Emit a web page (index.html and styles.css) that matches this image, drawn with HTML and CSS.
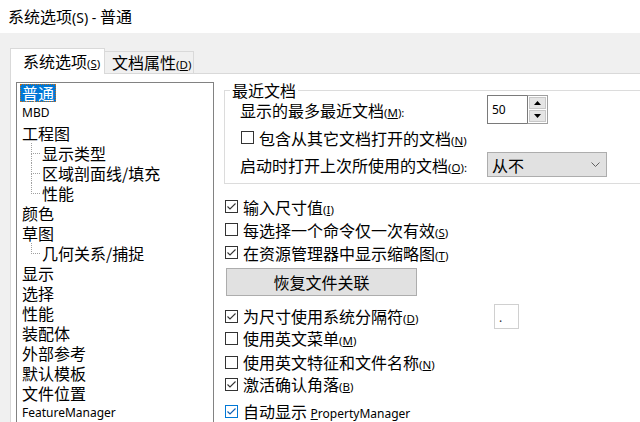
FILE: index.html
```html
<!DOCTYPE html>
<html lang="zh-CN">
<head>
<meta charset="utf-8">
<title>系统选项(S) - 普通</title>
<link rel="stylesheet" href="styles.css">
</head>
<body>
<div class="title">系统选项<span class="tl">(S) - </span>普通</div>
<div class="dialog">
  <div class="tabs">
    <div class="tab active">系统选项<span class="k">(<u>S</u>)</span></div>
    <div class="tab">文档属性<span class="k">(<u>D</u>)</span></div>
  </div>
  <div class="panel">
    <ul class="tree">
      <li><span class="item sel">普通</span></li>
      <li><span class="item lat">MBD</span></li>
      <li><span class="item">工程图</span></li>
      <li class="child"><span class="item">显示类型</span></li>
      <li class="child"><span class="item">区域剖面线/填充</span></li>
      <li class="child last"><span class="item">性能</span></li>
      <li><span class="item">颜色</span></li>
      <li><span class="item">草图</span></li>
      <li class="child last"><span class="item">几何关系/捕捉</span></li>
      <li><span class="item">显示</span></li>
      <li><span class="item">选择</span></li>
      <li><span class="item">性能</span></li>
      <li><span class="item">装配体</span></li>
      <li><span class="item">外部参考</span></li>
      <li><span class="item">默认模板</span></li>
      <li><span class="item">文件位置</span></li>
      <li><span class="item lat">FeatureManager</span></li>
    </ul>
    <div class="main">
      <fieldset class="group">
        <legend>最近文档</legend>
        <div class="grow r1">
          <span class="glabel">显示的最多最近文档<span class="k">(<u>M</u>):</span></span>
          <div class="spin">
            <div class="spin-field lat">50</div>
            <div class="spin-btns">
              <div class="sbtn"><svg width="7" height="4" viewBox="0 0 7 4"><path d="M0 4 L3.5 0 L7 4 Z" fill="#000"/></svg></div>
              <div class="sbtn"><svg width="7" height="4" viewBox="0 0 7 4"><path d="M0 0 L3.5 4 L7 0 Z" fill="#000"/></svg></div>
            </div>
          </div>
        </div>
        <div class="grow r2">
          <span class="cb in"></span>
          <span class="txt">包含从其它文档打开的文档<span class="k">(<u>N</u>)</span></span>
        </div>
        <div class="grow r3">
          <span class="glabel">启动时打开上次所使用的文档<span class="k">(<u>O</u>):</span></span>
          <div class="combo">
            <span>从不</span>
            <svg width="9" height="5" viewBox="0 0 9 5"><polyline points="0.5,0.5 4.5,4.5 8.5,0.5" fill="none" stroke="#606060" stroke-width="1"/></svg>
          </div>
        </div>
      </fieldset>

      <div class="row t23 first">
        <span class="cb"><svg width="11" height="11" viewBox="0 0 11 11"><path d="M1.5 5.5 L4 8 L9.5 2.5" fill="none" stroke="#333" stroke-width="1.1"/></svg></span>
        <span class="txt">输入尺寸值<span class="k">(<u>I</u>)</span></span>
      </div>
      <div class="row t23">
        <span class="cb"></span>
        <span class="txt">每选择一个命令仅一次有效<span class="k">(<u>S</u>)</span></span>
      </div>
      <div class="row t23">
        <span class="cb"><svg width="11" height="11" viewBox="0 0 11 11"><path d="M1.5 5.5 L4 8 L9.5 2.5" fill="none" stroke="#333" stroke-width="1.1"/></svg></span>
        <span class="txt">在资源管理器中显示缩略图<span class="k">(<u>T</u>)</span></span>
      </div>
      <button class="btn">恢复文件关联</button>
      <div class="row r4">
        <span class="cb"><svg width="11" height="11" viewBox="0 0 11 11"><path d="M1.5 5.5 L4 8 L9.5 2.5" fill="none" stroke="#333" stroke-width="1.1"/></svg></span>
        <span class="txt wide">为尺寸使用系统分隔符<span class="k">(<u>D</u>)</span></span>
        <span class="sep lat">.</span>
      </div>
      <div class="row">
        <span class="cb"></span>
        <span class="txt">使用英文菜单<span class="k">(<u>M</u>)</span></span>
      </div>
      <div class="row r6">
        <span class="cb"></span>
        <span class="txt">使用英文特征和文件名称<span class="k">(<u>N</u>)</span></span>
      </div>
      <div class="row">
        <span class="cb"><svg width="11" height="11" viewBox="0 0 11 11"><path d="M1.5 5.5 L4 8 L9.5 2.5" fill="none" stroke="#333" stroke-width="1.1"/></svg></span>
        <span class="txt">激活确认角落<span class="k">(<u>B</u>)</span></span>
      </div>
      <div class="row r8">
        <span class="cb focus"><svg width="11" height="11" viewBox="0 0 11 11"><path d="M1.5 5.5 L4 8 L9.5 2.5" fill="none" stroke="#1560b0" stroke-width="1.2"/></svg></span>
        <span class="txt">自动显示 <span class="lat"><u>P</u>ropertyManager</span></span>
      </div>
    </div>
  </div>
</div>
</body>
</html>
```
FILE: styles.css
```css
* { box-sizing: border-box; }

html, body {
  margin: 0;
  padding: 0;
}

body {
  width: 640px;
  height: 422px;
  overflow: hidden;
  background: #f0f0f0;
  font-family: "Noto Sans CJK SC", sans-serif;
  font-size: 16px;
  color: #000;
}

.lat {
  font-family: "Noto Sans", "Noto Sans CJK SC", sans-serif;
  font-size: 12px;
}

.k {
  font-family: "Noto Sans", sans-serif;
  font-size: 11.5px;
}

.k u { text-decoration-thickness: 1px; text-underline-offset: 1px; }

.title {
  height: 33px;
  background: #fff;
  padding-left: 8px;
  line-height: 32px;
}

.title .tl {
  font-family: "Noto Sans", sans-serif;
  font-size: 14px;
}

.tabs {
  height: 40px;
  display: flex;
  align-items: flex-end;
  padding-left: 10px;
}

.tab {
  border: 1px solid #d9d9d9;
  border-bottom: none;
  white-space: nowrap;
}

.tab.active {
  width: 95px;
  height: 26px;
  margin-bottom: -1px;
  background: #fff;
  padding-left: 12px;
  line-height: 24px;
  position: relative;
  z-index: 1;
}

.tab:not(.active) {
  width: 89px;
  height: 22px;
  border-left: none;
  background: #f0f0f0;
  padding-left: 7px;
  line-height: 20px;
}

.panel {
  margin-left: 10px;
  height: 349px;
  background: #fff;
  border-top: 1px solid #d9d9d9;
  border-left: 1px solid #d9d9d9;
  display: flex;
  align-items: flex-start;
}

/* tree */
.tree {
  list-style: none;
  margin: 8px 0 0 5px;
  padding: 0;
  width: 198px;
  height: 360px;
  flex: none;
  border: 1px solid #828282;
  border-bottom: none;
}

.tree li {
  height: 20px;
  line-height: 20px;
  white-space: nowrap;
  position: relative;
}

.item {
  display: inline-block;
  margin-left: 3px;
  padding: 0 2px;
  height: 18px;
  line-height: 18px;
  margin-top: 1px;
  vertical-align: top;
}

.item.sel {
  background: #0078d7;
  color: #fff;
  outline: 1px dotted #c07020;
  outline-offset: -1px;
}

.tree li.child .item { margin-left: 23px; }

.tree li.child::before {
  content: "";
  position: absolute;
  left: 14px;
  top: 0;
  width: 8px;
  height: 10px;
  border-left: 1px dotted #a0a0a0;
  border-bottom: 1px dotted #a0a0a0;
}

.tree li.child:not(.last)::after {
  content: "";
  position: absolute;
  left: 14px;
  top: 10px;
  bottom: 0;
  border-left: 1px dotted #a0a0a0;
}

/* right side */
.main {
  margin-left: 10px;
  width: 440px;
  flex: none;
  display: flex;
  flex-direction: column;
  align-items: flex-start;
}

.group {
  margin: 10px 0 0 0;
  width: 440px;
  min-width: 0;
  border: 1px solid #dcdcdc;
  padding: 0 0 5px 15px;
}

.group legend {
  margin-left: -10px;
  padding: 0 2px;
  line-height: 12px;
}

.grow {
  display: flex;
  align-items: center;
  white-space: nowrap;
}

.grow.r1 { height: 29px; margin-top: -1px; }
.grow.r2 { height: 27px; padding-left: 1px; }
.grow.r3 { height: 27px; }

.glabel {
  width: 247px;
  flex: none;
}

.spin {
  display: flex;
  height: 29px;
}

.spin-field {
  width: 40px;
  border: 1px solid #7a7a7a;
  border-right: none;
  padding-left: 4px;
  display: flex;
  align-items: center;
}

.spin-btns {
  width: 21px;
  display: flex;
  flex-direction: column;
  border: 1px solid #a0a0a0;
  border-left-color: #7a7a7a;
  padding: 1px;
  gap: 1px;
  background: #fff;
}

.sbtn {
  flex: 1;
  background: #e5e5e5;
  border: 1px solid #c8c8c8;
  display: flex;
  align-items: center;
  justify-content: center;
}

.combo {
  width: 120px;
  height: 25px;
  background: #e1e1e1;
  border: 1px solid #adadad;
  display: flex;
  align-items: center;
  justify-content: space-between;
  padding: 0 6px 0 4px;
}

/* checkbox rows */
.row {
  display: flex;
  align-items: center;
  height: 22px;
  padding-left: 1px;
  white-space: nowrap;
}

.row.t23 { height: 23px; }
.row.first { margin-top: 11px; }
.row.r4 { margin-top: 9px; }
.row.r6 { margin-top: 2px; }
.row.r8 { margin-top: 5px; }

.cb {
  width: 13px;
  height: 13px;
  flex: none;
  border: 1px solid #333;
  background: #fff;
  display: flex;
  align-items: center;
  justify-content: center;
  margin-right: 5px;
}

.cb.focus { border-color: #0078d7; }

.txt.wide {
  width: 251px;
  flex: none;
}

.sep {
  width: 25px;
  height: 25px;
  margin: -2px 0;
  border: 1px solid #d0d0d0;
  padding: 7px 0 0 4px;
  line-height: 12px;
  color: #333;
}

.btn {
  margin: 4px 0 0 2px;
  width: 191px;
  height: 28px;
  background: #e1e1e1;
  border: 1px solid #adadad;
  font-family: "Noto Sans CJK SC", sans-serif;
  font-size: 16px;
  color: #000;
  padding: 0;
  line-height: 24px;
}
```
